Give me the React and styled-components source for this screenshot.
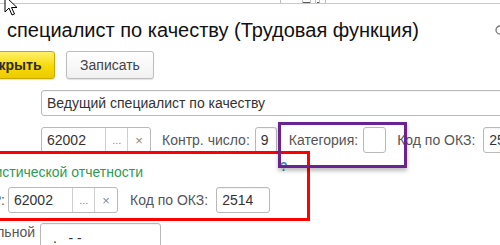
import React from 'react';
import styled, { createGlobalStyle } from 'styled-components';

const GlobalStyle = createGlobalStyle`
  html, body {
    margin: 0;
    padding: 0;
    background: #fff;
    overflow: hidden;
  }
  * { box-sizing: border-box; }
`;

const Screen = styled.div`
  position: relative;
  width: 500px;
  height: 245px;
  overflow: hidden;
  font-family: "Liberation Sans", Arial, sans-serif;
  color: #333;
`;

const TopStrip = styled.div`
  height: 4px;
  border-bottom: 1px solid #c9c9c9;
  display: flex;
  padding-left: 280px;
`;

const StripTab = styled.div`
  width: ${p => p.$w}px;
  height: 3px;
  border-left: 1px solid #bdbdbd;
  display: flex;
  justify-content: center;
  align-items: flex-end;
  & > span {
    width: ${p => p.$mark}px;
    height: 1px;
    background: #555;
  }
`;

const TitleRow = styled.div`
  display: flex;
  justify-content: space-between;
  align-items: center;
  margin-top: 12px;
  height: 28px;
  padding-left: 7px;
`;

const Title = styled.h1`
  margin: 0;
  font-size: 20px;
  font-weight: normal;
  color: #111;
  white-space: nowrap;
`;

const Toolbar = styled.div`
  display: flex;
  gap: 11px;
  margin-top: 7px;
  height: 28px;
  margin-left: -32px;
`;

const Button = styled.button`
  height: 28px;
  padding: 0 13px;
  border-radius: 3px;
  font-family: inherit;
  font-size: 14px;
  white-space: nowrap;
  border: 1px solid ${p => (p.$primary ? '#c9a800' : '#bdbdbd')};
  background: ${p => (p.$primary
    ? 'linear-gradient(#fff06a, #f6d800 60%, #ebcb00)'
    : 'linear-gradient(#ffffff, #f1f1f1)')};
  color: ${p => (p.$primary ? '#2b2b2b' : '#444')};
  font-weight: ${p => (p.$primary ? 'bold' : 'normal')};
  box-shadow: 0 1px 1px rgba(0, 0, 0, 0.12);
  width: ${p => p.$w}px;
`;

const Fields = styled.div`
  display: flex;
  flex-direction: column;
  margin-top: 11px;
`;

const Row = styled.div`
  display: flex;
  align-items: ${p => (p.$top ? 'flex-start' : 'center')};
  height: ${p => p.$h || 26}px;
  margin-top: ${p => p.$mt || 0}px;
  padding-left: ${p => p.$pl || 0}px;
  white-space: nowrap;
`;

const Input = styled.div`
  height: ${p => p.$h || 26}px;
  width: ${p => p.$w}px;
  flex: ${p => (p.$grow ? '1 0 auto' : '0 0 auto')};
  margin-left: ${p => p.$ml || 0}px;
  margin-right: ${p => (p.$grow ? -40 : 0)}px;
  border: 1px solid #b9b9b9;
  border-radius: 3px;
  background: #fff;
  font-size: 14px;
  color: #333;
  display: flex;
  align-items: ${p => (p.$top ? 'flex-start' : 'center')};
  padding: ${p => (p.$top ? '6px 0 0 12px' : '0 0 0 5px')};
  box-shadow: inset 0 1px 1px rgba(0, 0, 0, 0.05);
  overflow: hidden;
`;

const Picker = styled.div`
  display: flex;
  height: 26px;
  width: 110px;
  margin-left: ${p => p.$ml || 0}px;
  border: 1px solid #b9b9b9;
  border-radius: 3px;
  background: #fff;
  font-size: 14px;
  flex: 0 0 auto;
`;

const PickerValue = styled.div`
  width: 64px;
  display: flex;
  align-items: center;
  padding-left: 5px;
  color: #333;
`;

const PickerBtn = styled.div`
  width: ${p => p.$w}px;
  border-left: 1px solid #cfcfcf;
  display: flex;
  align-items: center;
  justify-content: center;
  color: #888;
  font-size: ${p => p.$fs}px;
`;

const Label = styled.span`
  font-size: 14px;
  color: #555;
  margin-left: ${p => p.$ml || 0}px;
  flex: 0 0 auto;
`;

const EdgeLabel = styled.div`
  width: ${p => p.$w}px;
  display: flex;
  justify-content: flex-end;
  font-size: 14px;
  color: ${p => p.$color || '#555'};
  flex: 0 0 auto;
  white-space: nowrap;
  padding-top: ${p => p.$pt || 0}px;
`;

const CheckBox = styled.div`
  width: 23px;
  height: 26px;
  margin-left: ${p => p.$ml || 0}px;
  border: 1px solid #b9b9b9;
  border-radius: 3px;
  background: #fff;
  flex: 0 0 auto;
`;

const GroupHead = styled.div`
  display: flex;
  align-items: center;
  height: 18px;
  margin-top: 10px;
`;

const Help = styled.span`
  margin-left: 137px;
  align-self: flex-start;
  margin-top: -3px;
  font-size: 12px;
  font-weight: bold;
  color: #3a7fc1;
`;

const Frame = styled.div`
  position: absolute;
  left: ${p => p.$x}px;
  top: ${p => p.$y}px;
  width: ${p => p.$w}px;
  height: ${p => p.$h}px;
  border: 3px solid ${p => p.$color};
  box-shadow: ${p => (p.$shadow ? '0 3px 4px rgba(0,0,0,0.25)' : 'none')};
  pointer-events: none;
`;

const Cursor = styled.svg`
  position: absolute;
  left: 4px;
  top: -5px;
`;

const EdgeIcon = styled.svg`
  position: absolute;
  left: 495px;
  top: 24px;
`;

export default function App() {
  return (
    <Screen>
      <GlobalStyle />
      <TopStrip>
        <StripTab $w={22} $mark={0}><span /></StripTab>
        <StripTab $w={8} $mark={7}><span /></StripTab>
        <StripTab $w={5} $mark={0}><span /></StripTab>
        <StripTab $w={4} $mark={2}><span /></StripTab>
        <StripTab $w={6} $mark={0}><span /></StripTab>
        <StripTab $w={2} $mark={0}><span /></StripTab>
      </TopStrip>

      <TitleRow>
        <Title>специалист по качеству (Трудовая функция)</Title>
      </TitleRow>

      <Toolbar>
        <Button $primary $w={87}>Закрыть</Button>
        <Button $w={88}>Записать</Button>
      </Toolbar>

      <Fields>
        <Row $pl={41} $h={26}>
          <Input $grow $w={470}>Ведущий специалист по качеству</Input>
        </Row>

        <Row $pl={41} $mt={11}>
          <Picker>
            <PickerValue>62002</PickerValue>
            <PickerBtn $w={22} $fs={11}>...</PickerBtn>
            <PickerBtn $w={23} $fs={13}>×</PickerBtn>
          </Picker>
          <Label $ml={11}>Контр. число:</Label>
          <Input $w={22} $ml={5}>9</Input>
          <Label $ml={12}>Категория:</Label>
          <CheckBox $ml={5} />
          <Label $ml={11}>Код по ОКЗ:</Label>
          <Input $w={60} $ml={8}>2514</Input>
        </Row>

        <GroupHead>
          <EdgeLabel $w={143} $color="#2e9a55">Данные для статистической отчетности</EdgeLabel>
          <Help>?</Help>
        </GroupHead>

        <Row $mt={6}>
          <EdgeLabel $w={5}>Код по ОКПДТР:</EdgeLabel>
          <Picker $ml={3}>
            <PickerValue>62002</PickerValue>
            <PickerBtn $w={22} $fs={11}>...</PickerBtn>
            <PickerBtn $w={23} $fs={13}>×</PickerBtn>
          </Picker>
          <Label $ml={12}>Код по ОКЗ:</Label>
          <Input $w={54} $ml={8}>2514</Input>
        </Row>

        <Row $mt={10} $h={30} $top>
          <EdgeLabel $w={35} $pt={1}>Вид профессиональной</EdgeLabel>
          <Input $w={121} $h={30} $ml={5} $top>.&nbsp;&nbsp;&nbsp;- -</Input>
        </Row>
      </Fields>

      <Frame $x={-10} $y={151} $w={320} $h={70} $color="#ff0000" />
      <Frame $x={278} $y={122} $w={129} $h={46} $color="#6a2390" $shadow />

      <EdgeIcon width="10" height="12" viewBox="0 0 10 12">
        <path d="M5 2 A4 4 0 0 0 5 10" fill="none" stroke="#777" strokeWidth="1.3" />
      </EdgeIcon>

      <Cursor width="14" height="22" viewBox="0 0 14 22">
        <path d="M1 1 L1 17 L5 13 L8 20 L10.5 19 L7.5 12.5 L13 12.5 Z" fill="#fff" stroke="#000" strokeWidth="1" strokeLinejoin="round" />
      </Cursor>
    </Screen>
  );
}
